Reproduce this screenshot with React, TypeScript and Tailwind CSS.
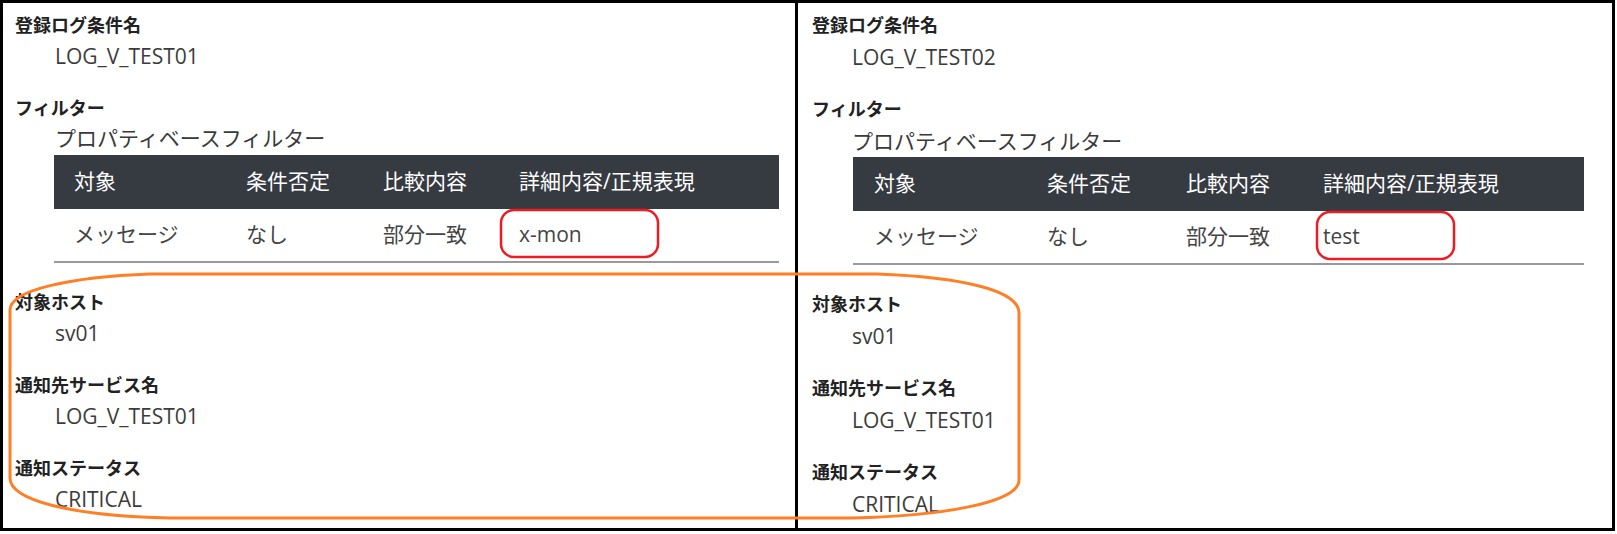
import { clsx } from "clsx";

type Panel = {
  condition: string;
  detail: string;
  host: string;
  service: string;
  status: string;
};

const panels: Panel[] = [
  { condition: "LOG_V_TEST01", detail: "x-mon", host: "sv01", service: "LOG_V_TEST01", status: "CRITICAL" },
  { condition: "LOG_V_TEST02", detail: "test", host: "sv01", service: "LOG_V_TEST01", status: "CRITICAL" },
];

const font = "font-['Open_Sans','Noto_Sans_CJK_JP',sans-serif]";

export default function App() {
  return (
    <div className={clsx("relative h-[534px] w-[1617px] bg-white", font)}>
      <div className="flex h-[531px] w-[1615px] border-[3px] border-black">
        <ConditionPanel data={panels[0]} />
        <ConditionPanel data={panels[1]} right />
      </div>

      {/* 注釈 (赤枠 / オレンジ枠) */}
      <svg className="pointer-events-none absolute left-0 top-0" width={1617} height={534} viewBox="0 0 1617 534" fill="none">
        <rect x={501} y={210} width={157} height={47} rx={13} stroke="#ed1c24" strokeWidth={2.5} />
        <rect x={1317} y={212} width={137} height={47} rx={13} stroke="#ed1c24" strokeWidth={2.5} />
        <path
          d="M 150 274 L 877 274 C 960 277, 1019 290, 1019 313 L 1019 480 C 1019 503, 940 516, 853 518 L 170 518 C 70 516, 10 500, 10 478 L 10 310 C 10 290, 70 277, 150 274 Z"
          stroke="#ff7f27"
          strokeWidth={3}
        />
      </svg>
    </div>
  );
}

function ConditionPanel({ data, right = false }: { data: Panel; right?: boolean }) {
  const valueGap = right ? "mt-[5px]" : "mt-[4px]";
  return (
    <section className={clsx("h-full", right ? "flex-1 border-l-[3px] border-black pl-[14px]" : "w-[792px] pl-[12px]")}>
      <div className="pt-[10px]">
        <Label>登録ログ条件名</Label>
        <Value className={valueGap}>{data.condition}</Value>
      </div>

      <div className="mt-[25px]">
        <Label>フィルター</Label>
        <div className={clsx("ml-[40px] text-[21px] leading-[30px] text-[#3a3a3a]", right ? "mt-[5px]" : "mt-[3px]")}>
          プロパティベースフィルター
        </div>
        <FilterTable detail={data.detail} right={right} />
      </div>

      <div className="mt-[27px]">
        <Label>対象ホスト</Label>
        <Value className={valueGap}>{data.host}</Value>
      </div>
      <div className="mt-[25px]">
        <Label>通知先サービス名</Label>
        <Value className={valueGap}>{data.service}</Value>
      </div>
      <div className="mt-[25px]">
        <Label>通知ステータス</Label>
        <Value className={valueGap}>{data.status}</Value>
      </div>
    </section>
  );
}

function Label({ children }: { children: string }) {
  return <div className="text-[18px] font-bold leading-[24px] text-[#222]">{children}</div>;
}

function Value({ children, className }: { children: string; className?: string }) {
  return <div className={clsx("ml-[40px] text-[21px] leading-[30px] text-[#3c3c3c]", className)}>{children}</div>;
}

function FilterTable({ detail, right }: { detail: string; right: boolean }) {
  const cols = right ? "grid-cols-[173px_139px_137px_1fr]" : "grid-cols-[172px_137px_136px_1fr]";
  const cell = right ? "pl-[21px]" : "pl-[20px]";
  return (
    <div className={clsx("text-[21px]", right ? "ml-[41px] mt-[1px] w-[731px]" : "ml-[39px] mt-[2px] w-[725px]")}>
      <div className={clsx("grid h-[54px] items-center bg-[#363a41] text-white", cols)}>
        <div className={cell}>対象</div>
        <div className={cell}>条件否定</div>
        <div className={cell}>比較内容</div>
        <div className={cell}>詳細内容/正規表現</div>
      </div>
      <div className={clsx("grid h-[54px] items-center border-b-2 border-[#9a9a9a] text-[#444]", cols)}>
        <div className={cell}>メッセージ</div>
        <div className={cell}>なし</div>
        <div className={cell}>部分一致</div>
        <div className={cell}>{detail}</div>
      </div>
    </div>
  );
}
